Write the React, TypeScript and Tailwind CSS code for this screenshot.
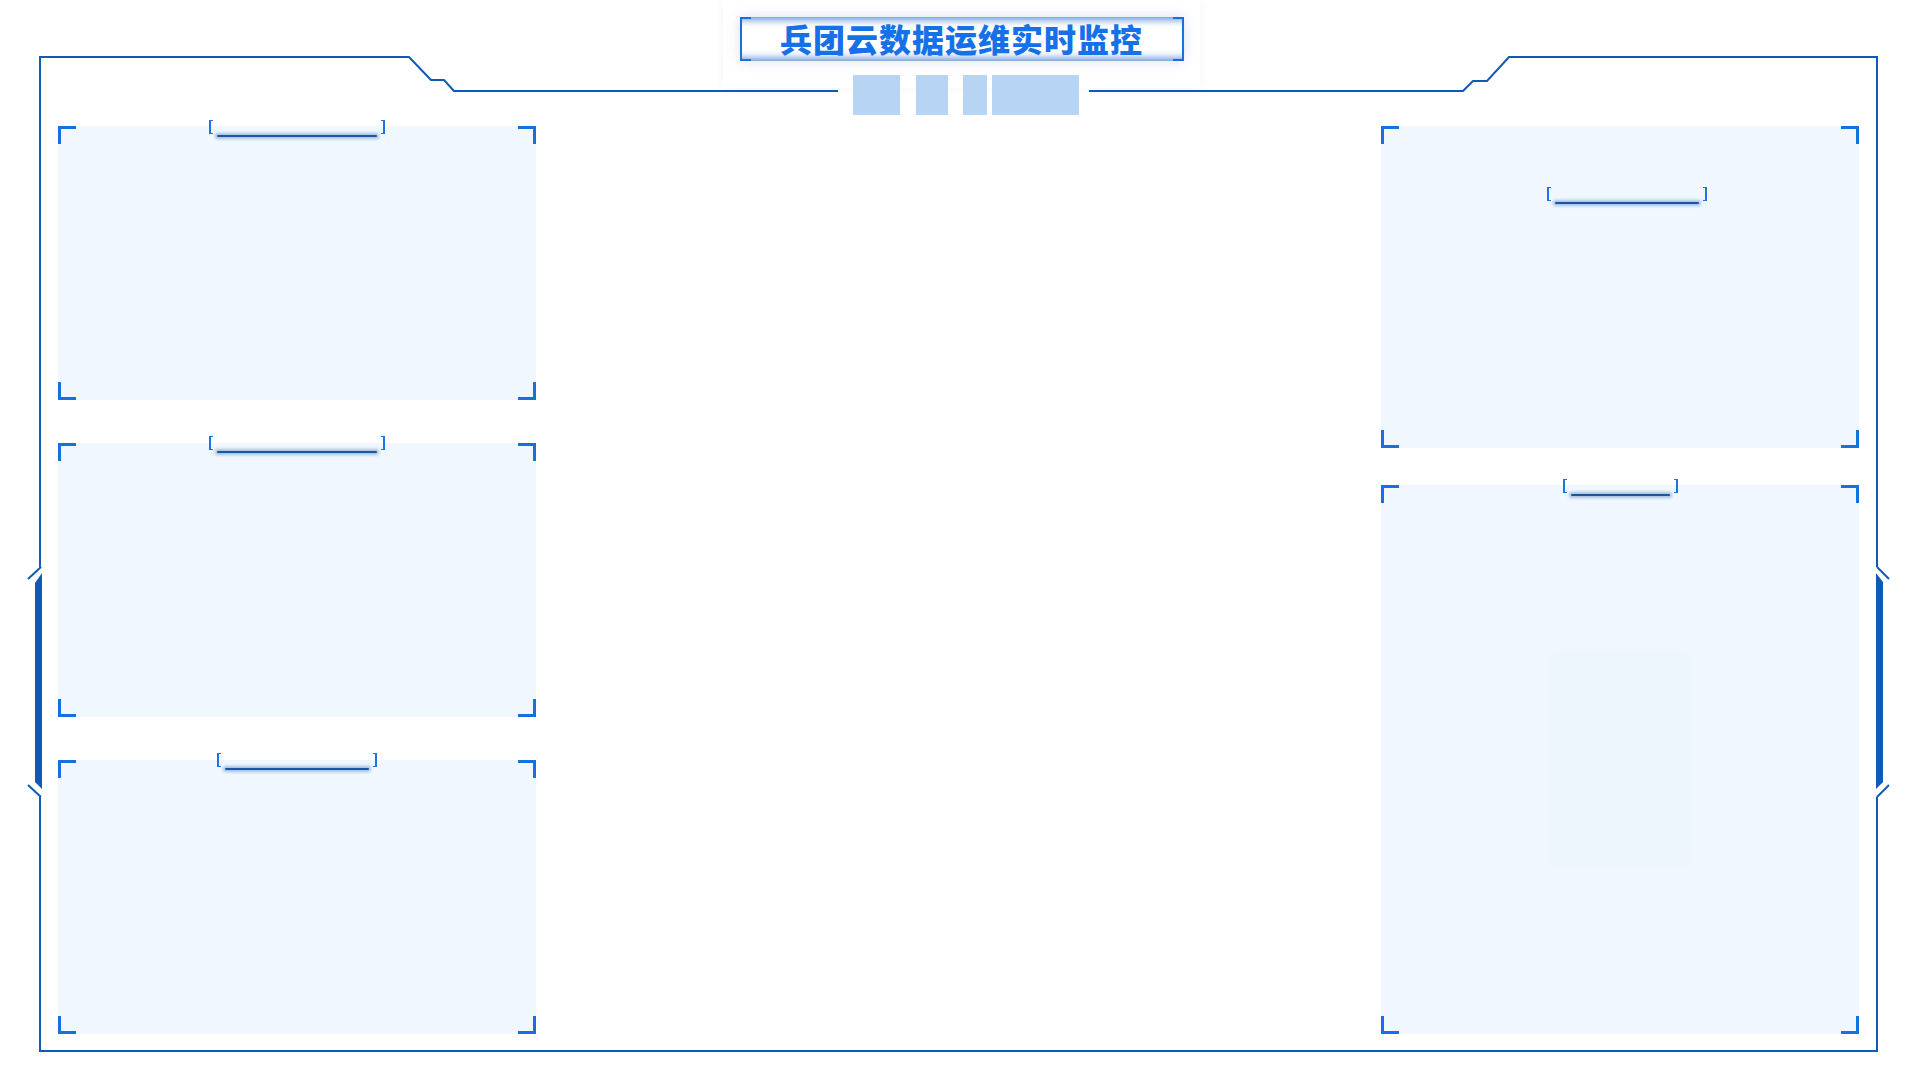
import React from "react";

const FRAME = "#0e5ab5";

function Corners() {
  return (
    <>
      <div className="absolute left-0 top-0 w-[18px] h-[18px] border-l-[3px] border-t-[3px] border-[#1570e2]" />
      <div className="absolute right-0 top-0 w-[18px] h-[18px] border-r-[3px] border-t-[3px] border-[#1570e2]" />
      <div className="absolute left-0 bottom-0 w-[18px] h-[18px] border-l-[3px] border-b-[3px] border-[#1570e2]" />
      <div className="absolute right-0 bottom-0 w-[18px] h-[18px] border-r-[3px] border-b-[3px] border-[#1570e2]" />
    </>
  );
}

function PanelHeader({ w, className = "" }: { w: string; className?: string }) {
  return (
    <div className={`relative h-[14px] shrink-0 ${w} ${className}`}>
      <div className="absolute left-0 top-0 h-full w-[4px] border-l-2 border-y border-[#1a73e8]" />
      <div className="absolute right-0 top-0 h-full w-[4px] border-r-2 border-y border-[#1a73e8]" />
      <div className="absolute left-[8px] right-[8px] top-[15px] h-[2px] rounded-full bg-[#1b56a2] shadow-[0_0_3px_2px_rgba(29,90,168,0.35)]" />
    </div>
  );
}

export default function App() {
  return (
    <div
      className="relative w-[1920px] h-[1080px] bg-white overflow-hidden"
      style={{ fontFamily: '"Noto Sans CJK SC", "Noto Sans", sans-serif' }}
    >
      <svg className="absolute inset-0 pointer-events-none" width="1920" height="1080" viewBox="0 0 1920 1080">
        <g fill="none" stroke={FRAME} strokeWidth="2">
          <path d="M40 567 L40 57 L409 57 L431 80 L444 80 L454 91 L838 91" />
          <path d="M1089 91 L1463 91 L1473 81 L1487 81 L1509 57 L1877 57 L1877 567" />
          <path d="M40 797 L40 1051 L1877 1051 L1877 797" />
          <path d="M41 567 L28 579" />
          <path d="M41 797 L28 785" />
          <path d="M1877 567 L1889 579" />
          <path d="M1877 797 L1889 785" />
        </g>
        <polygon points="35,583 42,573 42,789 35,782" fill={FRAME} />
        <polygon points="1876,573 1883,582 1883,782 1876,789" fill={FRAME} />
      </svg>

      <div className="relative flex flex-col h-full">
        {/* header */}
        <div className="h-[126px] shrink-0 flex justify-center pl-[3px]">
          <div className="w-[477px] h-[88px] bg-white shadow-[0_0_8px_rgba(30,60,120,0.06)] flex flex-col items-center pt-[17px]">
            <div className="relative shrink-0 w-[444px] h-[44px] bg-white flex items-center justify-center shadow-[inset_0_9px_9px_-7px_rgba(25,95,200,0.8),inset_0_-9px_9px_-7px_rgba(25,95,200,0.8),0_0_12px_rgba(60,100,170,0.2)]">
              <div className="absolute left-0 top-0 h-full w-[11px] border-l-2 border-y-2 border-[#1a6fe0]" />
              <div className="absolute right-0 top-0 h-full w-[11px] border-r-2 border-y-2 border-[#1a6fe0]" />
              <span className="relative -mt-[3px] text-[32px] leading-none font-black tracking-[1px] text-[#1670e8]">
                兵团云数据运维实时监控
              </span>
            </div>
            <div className="flex shrink-0 mt-[14px] ml-[9px] h-[40px]">
              <div className="w-[47px] h-full bg-[#b8d4f5]" />
              <div className="w-[32px] h-full bg-[#b8d4f5] ml-[16px]" />
              <div className="w-[24px] h-full bg-[#b8d4f5] ml-[15px]" />
              <div className="w-[87px] h-full bg-[#b8d4f5] ml-[5px]" />
            </div>
          </div>
        </div>

        {/* body */}
        <div className="flex justify-between pl-[58px] pr-[61px]">
          <div className="w-[478px] flex flex-col gap-[43px]">
            <div className="relative h-[274px] bg-[#f0f7fe] flex flex-col items-center">
              <Corners />
              <PanelHeader w="w-[176px]" className="-mt-[6px]" />
            </div>
            <div className="relative h-[274px] bg-[#f0f7fe] flex flex-col items-center">
              <Corners />
              <PanelHeader w="w-[176px]" className="-mt-[7px]" />
            </div>
            <div className="relative h-[274px] bg-[#f0f7fe] flex flex-col items-center">
              <Corners />
              <PanelHeader w="w-[160px]" className="-mt-[7px]" />
            </div>
          </div>

          <div className="w-[478px] flex flex-col gap-[37px]">
            <div className="relative h-[322px] bg-[#f0f7fe] flex flex-col items-center">
              <Corners />
              <PanelHeader w="w-[160px]" className="mt-[61px] translate-x-[7px]" />
            </div>
            <div className="relative h-[549px] bg-[#f0f7fe] flex flex-col items-start">
              <Corners />
              <PanelHeader w="w-[115px]" className="-mt-[6px] ml-[182px]" />
              <div className="shrink-0 mt-[160px] ml-[171px] w-[136px] h-[210px] rounded-[10px] bg-[#eef6fd] shadow-[0_0_6px_rgba(235,242,252,0.8)]" />
              <div className="shrink-0 mt-[141px] ml-[37px] w-[370px] h-[1px] bg-[#f5f9fe]" />
            </div>
          </div>
        </div>
      </div>
    </div>
  );
}
